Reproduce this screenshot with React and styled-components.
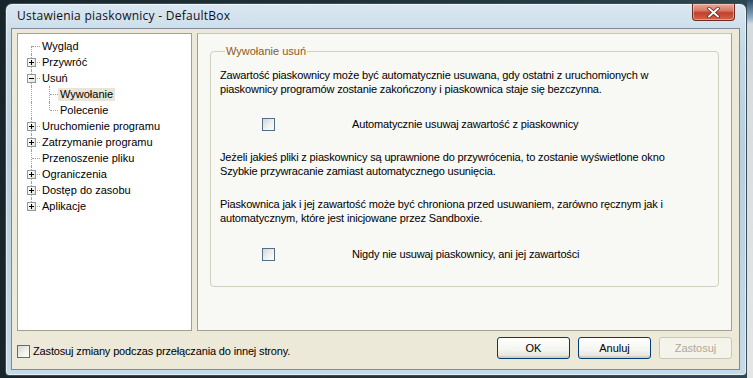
import React from "react";
import styled, { createGlobalStyle, css } from "styled-components";

const GlobalStyle = createGlobalStyle`
  html, body { margin: 0; padding: 0; }
  body {
    width: 753px;
    height: 378px;
    overflow: hidden;
    background: #1d2c33;
    font-family: "Liberation Sans", Arial, sans-serif;
  }
`;

const Desktop = styled.div`
  width: 753px;
  height: 378px;
  box-sizing: border-box;
  padding: 3px 0 0 5px;
  background:
    linear-gradient(180deg, #2a4a66 0px, #8fb0c8 18px, #d4dadd 24px, #e4e6e6 100%) 747px 0 / 6px 100% no-repeat,
    linear-gradient(90deg, #18262c 0%, #22363c 60%, #2d4650 100%);
  display: flex;
  overflow: hidden;
`;

const Window = styled.div`
  width: 742px;
  height: 373px;
  box-sizing: border-box;
  border: 1px solid #3d4d58;
  border-radius: 7px 7px 4px 4px;
  background: linear-gradient(180deg, #d9e7f1 0%, #c4d8e7 12%, #b7cfe1 40%, #c6dae8 100%);
  box-shadow: inset 0 0 0 1px rgba(255, 255, 255, 0.6);
  padding: 0 6px 5px 5px;
  display: flex;
  flex-direction: column;
`;

const TitleBar = styled.div`
  height: 24px;
  flex: none;
  display: flex;
  align-items: flex-start;
  justify-content: space-between;
`;

const Title = styled.span`
  font-family: "Open Sans", "DejaVu Sans", sans-serif;
  font-size: 12px;
  color: #111;
  padding: 5px 0 0 6px;
  letter-spacing: 0.25px;
  line-height: 14px;
`;

const CloseButton = styled.div`
  width: 41px;
  height: 16px;
  margin: 0 5px 0 0;
  border: 1px solid #6d2a22;
  border-top: none;
  border-radius: 0 0 4px 4px;
  background: linear-gradient(180deg, #e8a89c 0%, #d97a68 40%, #c2412c 55%, #d6614a 100%);
  display: flex;
  align-items: center;
  justify-content: center;
  box-shadow: inset 0 0 0 1px rgba(255, 220, 210, 0.5);
`;

const Client = styled.div`
  flex: 1;
  border: 1px solid #7a8a96;
  background: #ece9d8;
  display: flex;
  flex-direction: column;
  padding: 4px 7px 0 5px;
`;

const Main = styled.div`
  display: flex;
  gap: 5px;
  height: 298px;
`;

const TreePanel = styled.div`
  width: 175px;
  box-sizing: border-box;
  background: #fff;
  border: 1px solid #a3a08f;
  padding: 4px 0 0 4px;
  font-size: 11px;
`;

const TreeRow = styled.div`
  display: flex;
  height: 16px;
  align-items: center;
`;

const Gutter = styled.div`
  position: relative;
  width: 18px;
  height: 16px;
  flex: none;

  ${(p) =>
    p.$vertical &&
    css`
      &::before {
        content: "";
        position: absolute;
        left: 9px;
        top: ${p.$first ? "8px" : "0"};
        height: ${p.$last ? "8px" : p.$first ? "8px" : "16px"};
        border-left: 1px dotted #a0a0a0;
      }
    `}

  ${(p) =>
    p.$horizontal &&
    css`
      &::after {
        content: "";
        position: absolute;
        left: 10px;
        top: 8px;
        width: 8px;
        border-top: 1px dotted #a0a0a0;
      }
    `}
`;

const Expander = styled.span`
  position: absolute;
  left: 5px;
  top: 4px;
  width: 7px;
  height: 7px;
  border: 1px solid #8a9aa8;
  background: linear-gradient(135deg, #ffffff 0%, #e6e3d6 100%);
  z-index: 1;

  &::before {
    content: "";
    position: absolute;
    left: 1px;
    top: 3px;
    width: 5px;
    height: 1px;
    background: #000;
  }

  ${(p) =>
    p.$plus &&
    css`
      &::after {
        content: "";
        position: absolute;
        left: 3px;
        top: 1px;
        width: 1px;
        height: 5px;
        background: #000;
      }
    `}
`;

const TreeLabel = styled.span`
  padding: 0 2px;
  height: 13px;
  line-height: 13px;
  color: #000;
  white-space: nowrap;
  background: ${(p) => (p.$selected ? "#e9e6d7" : "transparent")};
`;

const PagePanel = styled.div`
  flex: 1;
  box-sizing: border-box;
  background: #f8f8f5;
  border: 1px solid #a3a08f;
  border-top-color: #c8c6b8;
  padding: 11px 12px 0 12px;
`;

const GroupBox = styled.fieldset`
  margin: 0;
  box-sizing: border-box;
  height: 242px;
  border: 1px solid #d0d0bf;
  border-radius: 4px;
  padding: 10px 12px 0 9px;
  font-size: 11px;
  color: #000;
`;

const Legend = styled.legend`
  padding: 0 1px;
  margin-left: 5px;
  color: #8b5a1b;
  font-size: 11px;
  line-height: 13px;
`;

const Paragraph = styled.p`
  margin: 0 0 ${(p) => p.$after || 0}px;
  line-height: 14px;
  letter-spacing: -0.15px;
`;

const CheckRow = styled.div`
  display: flex;
  align-items: center;
  height: 16px;
  margin: ${(p) => p.$top || 0}px 0 ${(p) => p.$bottom || 0}px 42px;
`;

const CheckBox = styled.span`
  width: 11px;
  height: 11px;
  flex: none;
  border: 1px solid #4f6f8c;
  background: linear-gradient(135deg, #d6d6cf 0%, #eeeeea 50%, #ffffff 100%);
`;

const CheckLabel = styled.span`
  margin-left: ${(p) => p.$gap || 4}px;
  letter-spacing: -0.15px;
`;

const Footer = styled.div`
  flex: 1;
  display: flex;
  align-items: center;
  font-size: 11px;
`;

const FooterCheck = styled.label`
  display: flex;
  align-items: center;
  flex: 1;
  margin-top: 2px;
`;

const Buttons = styled.div`
  display: flex;
  gap: 8px;
  margin-top: -5px;
`;

const Button = styled.button`
  width: 73px;
  height: 22px;
  box-sizing: border-box;
  border-radius: 3px;
  font-family: "Liberation Sans", Arial, sans-serif;
  font-size: 11px;
  padding: 0;
  border: 1px solid ${(p) => (p.disabled ? "#cac8bb" : "#003c74")};
  color: ${(p) => (p.disabled ? "#aca899" : "#000")};
  background: ${(p) =>
    p.disabled
      ? "#f5f4ea"
      : "linear-gradient(180deg, #ffffff 0%, #f4f4f0 60%, #e3e2d8 100%)"};
  box-shadow: ${(p) =>
    p.disabled ? "none" : "inset 0 -2px 0 #d6d0c0, inset 0 1px 0 #fff"};
`;

const tree = [
  { label: "Wygląd", level: 0 },
  { label: "Przywróć", level: 0, exp: "plus" },
  { label: "Usuń", level: 0, exp: "minus" },
  { label: "Wywołanie", level: 1, selected: true },
  { label: "Polecenie", level: 1, lastChild: true },
  { label: "Uruchomienie programu", level: 0, exp: "plus" },
  { label: "Zatrzymanie programu", level: 0, exp: "plus" },
  { label: "Przenoszenie pliku", level: 0 },
  { label: "Ograniczenia", level: 0, exp: "plus" },
  { label: "Dostęp do zasobu", level: 0, exp: "plus" },
  { label: "Aplikacje", level: 0, exp: "plus" },
];

function TreeItem({ item, index, count }) {
  const first = index === 0;
  const last = index === count - 1;
  if (item.level === 1) {
    return (
      <TreeRow>
        <Gutter $vertical />
        <Gutter $vertical $horizontal $last={item.lastChild} />
        <TreeLabel $selected={item.selected}>{item.label}</TreeLabel>
      </TreeRow>
    );
  }
  return (
    <TreeRow>
      <Gutter $vertical $horizontal $first={first} $last={last}>
        {item.exp && <Expander $plus={item.exp === "plus"} />}
      </Gutter>
      <TreeLabel>{item.label}</TreeLabel>
    </TreeRow>
  );
}

export default function App() {
  return (
    <>
      <GlobalStyle />
      <Desktop>
        <Window>
          <TitleBar>
            <Title>Ustawienia piaskownicy - DefaultBox</Title>
            <CloseButton>
              <svg width="13" height="11" viewBox="0 0 13 11">
                <path
                  d="M2 1.5 L11 9.5 M11 1.5 L2 9.5"
                  stroke="#5a1a12"
                  strokeWidth="3.4"
                  strokeLinecap="round"
                />
                <path
                  d="M2 1.5 L11 9.5 M11 1.5 L2 9.5"
                  stroke="#ffffff"
                  strokeWidth="2"
                  strokeLinecap="round"
                />
              </svg>
            </CloseButton>
          </TitleBar>
          <Client>
            <Main>
              <TreePanel>
                {tree.map((item, i) => (
                  <TreeItem key={item.label} item={item} index={i} count={tree.length} />
                ))}
              </TreePanel>
              <PagePanel>
                <GroupBox>
                  <Legend>Wywołanie usuń</Legend>
                  <Paragraph>
                    Zawartość piaskownicy może być automatycznie usuwana, gdy ostatni z uruchomionych w
                    <br />
                    piaskownicy programów zostanie zakończony i piaskownica staje się bezczynna.
                  </Paragraph>
                  <CheckRow $top={20} $bottom={18}>
                    <CheckBox />
                    <CheckLabel $gap={77}>Automatycznie usuwaj zawartość z piaskownicy</CheckLabel>
                  </CheckRow>
                  <Paragraph $after={19}>
                    Jeżeli jakieś pliki z piaskownicy są uprawnione do przywrócenia, to zostanie wyświetlone okno
                    <br />
                    Szybkie przywracanie zamiast automatycznego usunięcia.
                  </Paragraph>
                  <Paragraph>
                    Piaskownica jak i jej zawartość może być chroniona przed usuwaniem, zarówno ręcznym jak i
                    <br />
                    automatycznym, które jest inicjowane przez Sandboxie.
                  </Paragraph>
                  <CheckRow $top={21}>
                    <CheckBox />
                    <CheckLabel $gap={77}>Nigdy nie usuwaj piaskownicy, ani jej zawartości</CheckLabel>
                  </CheckRow>
                </GroupBox>
              </PagePanel>
            </Main>
            <Footer>
              <FooterCheck>
                <CheckBox />
                <CheckLabel $gap={3}>Zastosuj zmiany podczas przełączania do innej strony.</CheckLabel>
              </FooterCheck>
              <Buttons>
                <Button>OK</Button>
                <Button>Anuluj</Button>
                <Button disabled>Zastosuj</Button>
              </Buttons>
            </Footer>
          </Client>
        </Window>
      </Desktop>
    </>
  );
}
